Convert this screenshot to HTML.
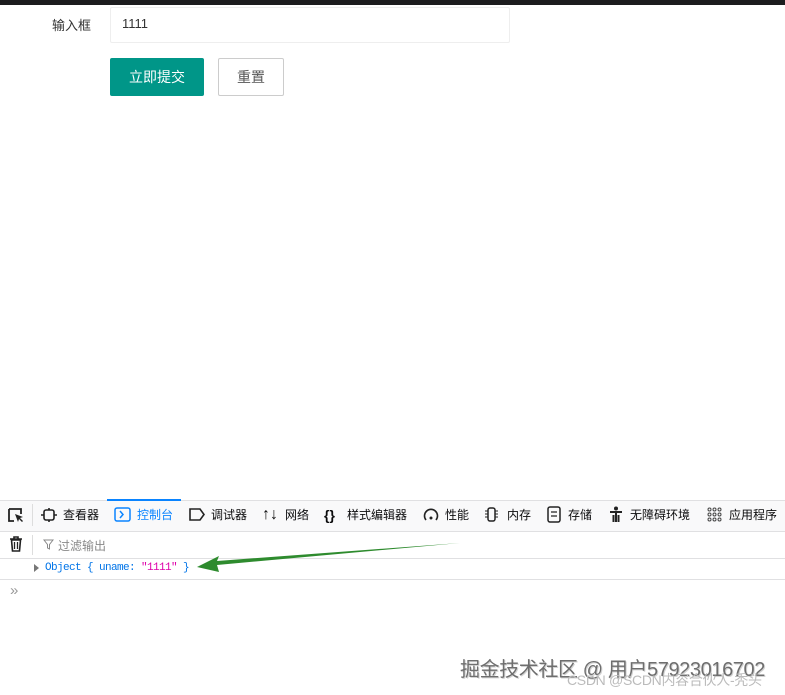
<!DOCTYPE html>
<html><head><meta charset="utf-8"><style>
body{margin:0;width:785px;height:695px;background:#fff;position:relative;overflow:hidden;font-family:"Liberation Sans","Noto Sans CJK SC",sans-serif;}
.a{position:absolute;}
.tab{position:absolute;top:500px;height:30px;line-height:30px;font-size:12px;color:#0c0c0d;white-space:nowrap;}
</style></head><body>
<div class="a" style="left:0;top:0;width:785px;height:5px;background:#1c1c1e"></div>
<div class="a" style="left:52px;top:15px;font-size:13px;color:#333">输入框</div>
<div class="a" style="left:110px;top:7px;width:398px;height:34px;border:1px solid #eee;border-radius:2px"></div>
<div class="a" style="left:122px;top:16px;font-size:13px;color:#333">1111</div>
<div class="a" style="left:110px;top:58px;width:94px;height:38px;background:#009688;border-radius:2px;color:#fff;font-size:14px;line-height:38px;text-align:center">立即提交</div>
<div class="a" style="left:218px;top:58px;width:64px;height:36px;border:1px solid #ccc;border-radius:2px;color:#555;font-size:14px;line-height:36px;text-align:center">重置</div>

<div class="a" style="left:0;top:500px;width:785px;height:30px;background:#f9f9fa;border-top:1px solid #e0e0e2;border-bottom:1px solid #e0e0e2"></div>
<div class="a" style="left:107px;top:499px;width:74px;height:2px;background:#0a84ff"></div>
<svg class="a" style="left:7px;top:507px" width="18" height="16"><path d="M2 2h12v5M2 2v12h5" fill="none" stroke="#222" stroke-width="1.8"/><path d="M8 7l8 3-3 1 3 3-1 1-3-3-1 3z" fill="#222"/></svg>
<div class="a" style="left:32px;top:504px;width:1px;height:22px;background:#ddd"></div>
<svg class="a" style="left:41px;top:508px" width="16" height="14"><rect x="3" y="2" width="10" height="10" rx="2" fill="none" stroke="#222" stroke-width="1.6"/><path d="M8 0v2M8 12v2M0 7h3M13 7h3" stroke="#222" stroke-width="1.6"/></svg>
<div class="tab" style="left:63px">查看器</div>
<svg class="a" style="left:114px;top:507px" width="17" height="15"><rect x="1" y="1" width="15" height="13" rx="2" fill="none" stroke="#0a84ff" stroke-width="1.5"/><path d="M6 4l3 3.5-3 3.5" fill="none" stroke="#0a84ff" stroke-width="1.5"/></svg>
<div class="tab" style="left:137px;color:#0a84ff">控制台</div>
<svg class="a" style="left:189px;top:508px" width="17" height="13"><path d="M1 1h10l4 5.5-4 5.5H1z" fill="none" stroke="#222" stroke-width="1.6"/></svg>
<div class="tab" style="left:211px">调试器</div>
<div class="tab" style="left:262px;font-size:16px;font-weight:bold">↑↓</div>
<div class="tab" style="left:285px">网络</div>
<div class="tab" style="left:324px;font-weight:bold;font-size:14px">{}</div>
<div class="tab" style="left:347px">样式编辑器</div>
<svg class="a" style="left:423px;top:507px" width="16" height="15"><path d="M3 13A6.5 6.5 0 1 1 13 13" fill="none" stroke="#222" stroke-width="1.6"/><circle cx="8" cy="11" r="1.5" fill="#222"/></svg>
<div class="tab" style="left:445px">性能</div>
<svg class="a" style="left:484px;top:507px" width="16" height="15"><rect x="4" y="1" width="7" height="13" rx="2" fill="none" stroke="#222" stroke-width="1.5"/><path d="M1 4h3M1 7h3M1 10h3M11 4h3M11 7h3M11 10h3" stroke="#222"/></svg>
<div class="tab" style="left:507px">内存</div>
<svg class="a" style="left:547px;top:506px" width="14" height="17"><rect x="1" y="1" width="12" height="15" rx="2" fill="none" stroke="#222" stroke-width="1.5"/><path d="M4 6h6M4 10h6" stroke="#222" stroke-width="1.3"/></svg>
<div class="tab" style="left:568px">存储</div>
<svg class="a" style="left:609px;top:506px" width="14" height="17"><circle cx="7" cy="2.5" r="2" fill="#222"/><path d="M1 6h12M7 6v10M4.5 9v7M9.5 9v7" stroke="#222" stroke-width="2"/></svg>
<div class="tab" style="left:630px">无障碍环境</div>
<svg class="a" style="left:707px;top:507px" width="15" height="15"><g fill="none" stroke="#444"><circle cx="2.5" cy="2.5" r="1.5"/><circle cx="7.5" cy="2.5" r="1.5"/><circle cx="12.5" cy="2.5" r="1.5"/><circle cx="2.5" cy="7.5" r="1.5"/><circle cx="7.5" cy="7.5" r="1.5"/><circle cx="12.5" cy="7.5" r="1.5"/><circle cx="2.5" cy="12.5" r="1.5"/><circle cx="7.5" cy="12.5" r="1.5"/><circle cx="12.5" cy="12.5" r="1.5"/></g></svg>
<div class="tab" style="left:729px">应用程序</div>

<svg class="a" style="left:9px;top:536px" width="14" height="16"><path d="M1 3h12M5 3V1h4v2" fill="none" stroke="#222" stroke-width="1.6"/><path d="M2.5 4h9l-1 11h-7z" fill="none" stroke="#222" stroke-width="1.6"/><path d="M5.5 6v7M8.5 6v7" stroke="#222" stroke-width="1.3"/></svg>
<div class="a" style="left:32px;top:535px;width:1px;height:20px;background:#ddd"></div>
<svg class="a" style="left:43px;top:539px" width="11" height="11"><path d="M1 1h9L6.5 5.5V10l-2-1V5.5z" fill="none" stroke="#888"/></svg>
<div class="a" style="left:58px;top:537px;font-size:12px;color:#888">过滤输出</div>
<div class="a" style="left:0;top:558px;width:785px;height:1px;background:#e0e0e2"></div>
<div class="a" style="left:34px;top:564px;width:0;height:0;border-left:5px solid #777;border-top:4px solid transparent;border-bottom:4px solid transparent"></div>
<div class="a" style="left:45px;top:562px;font-family:'Liberation Mono',monospace;font-size:11px;letter-spacing:-0.6px;color:#0074e8;white-space:pre">Object { uname: <span style="color:#dd00a9">"1111"</span> }</div>
<svg class="a" style="left:197px;top:540px" width="270" height="35"><path d="M0 27 L22 16 L20 21 L263 3 L20 25 L22 32z" fill="#2e8b2e"/></svg>
<div class="a" style="left:0;top:579px;width:785px;height:1px;background:#e0e0e2"></div>
<div class="a" style="left:10px;top:582px;font-size:15px;color:#999">»</div>
<div class="a" style="left:460px;top:653px;font-size:20px;letter-spacing:-0.4px;color:#555;opacity:.85;white-space:nowrap;text-shadow:1px 1px 0 #ccc">掘金技术社区 @ 用户57923016702</div>
<div class="a" style="left:567px;top:670px;font-size:14px;letter-spacing:-0.3px;color:#bbb;white-space:nowrap">CSDN @SCDN内容合伙人-秃头</div>
</body></html>
